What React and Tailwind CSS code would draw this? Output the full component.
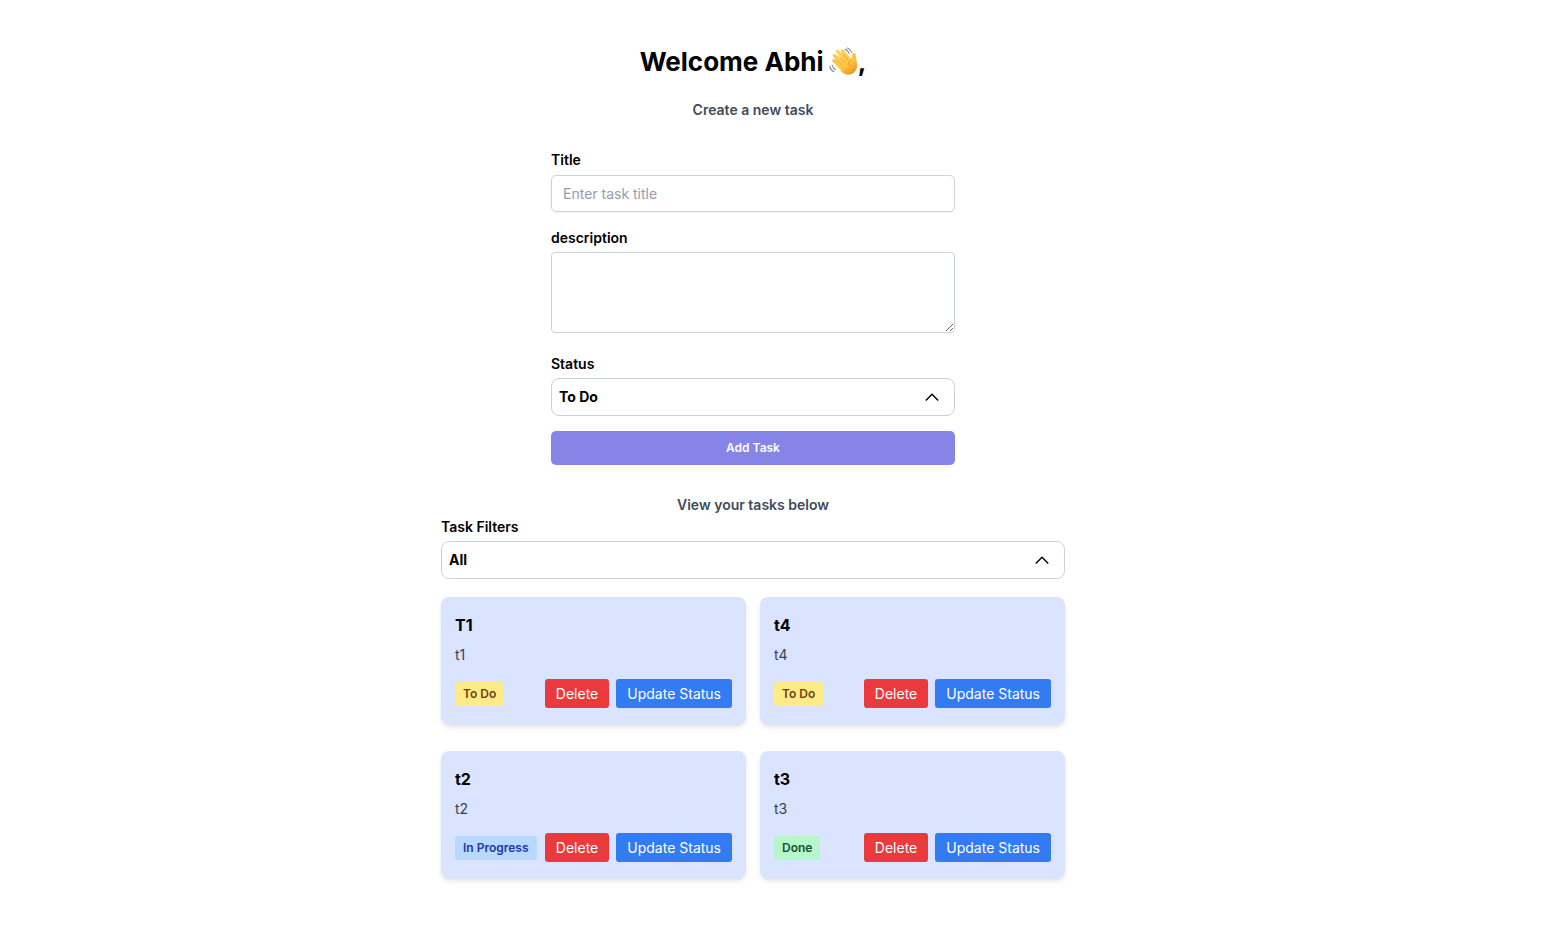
const tasks = [
  { title: "T1", description: "t1", status: "To Do" },
  { title: "t4", description: "t4", status: "To Do" },
  { title: "t2", description: "t2", status: "In Progress" },
  { title: "t3", description: "t3", status: "Done" },
];

const badgeStyles = {
  "To Do": "bg-[#feeb87] text-[#713f12]",
  "In Progress": "bg-[#b9d8fe] text-[#1e3a9f]",
  Done: "bg-[#b5f6cb] text-[#14532d]",
};

function WavingHand() {
  return (
    <svg viewBox="0 0 30 30" className="-mx-px inline-block size-[30px] align-[-6px]" role="img" aria-label="Waving hand">
      <defs>
        <linearGradient id="skin" x1="0" y1="0" x2="0.7" y2="1">
          <stop offset="0" stopColor="#ffd75e" />
          <stop offset="0.65" stopColor="#fdc13c" />
          <stop offset="1" stopColor="#ee9726" />
        </linearGradient>
      </defs>
      <g fill="none" strokeLinecap="round">
        <path d="M5.2 8.6 14 17" strokeWidth="3.2" stroke="#fecb47" />
        <path d="M8.4 4.4 17 14" strokeWidth="3.2" stroke="#ffd052" />
        <path d="M13.4 3.9 20.5 12.4" strokeWidth="3.2" stroke="#ffd052" />
        <path d="M4.8 13.6 12 20.5" strokeWidth="3.1" stroke="#fcc141" />
      </g>
      <path
        d="M8.2 13.6 16.3 6.6 22.1 12.4C22.8 11.2 22.8 9.6 22.9 7.9 23.1 5.6 26.5 5.3 26.9 7.9 27.2 10 27.1 12.4 27.8 15.2 28.9 19.4 27.8 23.3 24.4 25.7 21.1 28.1 16.8 27.9 13.4 24.6L6.9 18Z"
        fill="url(#skin)"
      />
      <g fill="none" stroke="#e69a2b" strokeWidth="0.7" strokeLinecap="round">
        <path d="M6.8 12.4 12.6 17.8M8.4 8.6 15 14.8M12.4 6 18.6 12.8" />
        <path d="M22.1 12.4C19.7 13.8 19 16.2 20.6 18.8" />
        <path d="M12 24C16.5 28.4 21.6 27.9 25 25" strokeWidth="0.9" />
      </g>
      <g fill="none" stroke="#85888d" strokeWidth="1.1" strokeLinecap="round">
        <path d="M16.2 2.4C18.2 3 19.4 4.4 20.1 6.4M18.4 1C20.4 1.6 21.9 3.2 22.5 5.2" />
        <path d="M0.8 19.3C1.2 21.8 2.6 23.6 4.9 24.8M3.2 18.2C3.6 20.2 4.6 21.6 6.5 22.7" />
      </g>
    </svg>
  );
}

function SelectField({ id, label, options }) {
  return (
    <div className="flex flex-col gap-1">
      <label htmlFor={id} className="leading-5 font-semibold">
        {label}
      </label>
      <div className="relative">
        <select
          id={id}
          className="block h-[38px] w-full appearance-none rounded-lg border border-[#cdd1d8] bg-white px-[7px] font-bold"
        >
          {options.map((option) => (
            <option key={option}>{option}</option>
          ))}
        </select>
        <svg
          viewBox="0 0 16 16"
          className="pointer-events-none absolute top-[11px] right-[15px] size-4"
          fill="none"
          stroke="currentColor"
          strokeWidth="1.4"
          aria-hidden="true"
        >
          <path d="M1.8 11.4 8 5.2 14.2 11.4" />
        </svg>
      </div>
    </div>
  );
}

function TaskCard({ task }) {
  return (
    <article className="rounded-lg bg-[#dae3ff] px-[14px] py-4 shadow-md">
      <h2 className="text-base leading-6 font-bold">{task.title}</h2>
      <p className="mt-2 leading-5 text-[#374151]">{task.description}</p>
      <div className="mt-[14px] flex items-center justify-between">
        <span className={`rounded-[3px] px-2 py-1 text-xs leading-4 font-semibold ${badgeStyles[task.status]}`}>
          {task.status}
        </span>
        <div className="flex gap-[7px]">
          <button type="button" className="h-[29px] rounded-[3px] bg-[#eb3a3e] px-[11px] text-white">
            Delete
          </button>
          <button type="button" className="h-[29px] rounded-[3px] bg-[#327bf2] px-[11px] text-white">
            Update Status
          </button>
        </div>
      </div>
    </article>
  );
}

export default function App() {
  return (
    <main className="flex flex-col items-center bg-white pt-11 pr-[45px] pb-14 font-['Inter',sans-serif] text-sm text-black">
      <h1 className="text-[26px] leading-9 font-bold">
        Welcome Abhi <WavingHand />,
      </h1>
      <p className="mt-5 leading-5 font-semibold text-[#424b5a]">Create a new task</p>

      <form className="mt-[30px] flex w-full max-w-[404px] flex-col" onSubmit={(event) => event.preventDefault()}>
        <label htmlFor="title" className="leading-5 font-semibold">
          Title
        </label>
        <input
          id="title"
          type="text"
          placeholder="Enter task title"
          className="mt-[5px] h-[37px] rounded-[5px] border border-[#cdd1d8] px-[11px] shadow-xs placeholder:text-[#959dab]"
        />
        <label htmlFor="description" className="mt-4 leading-5 font-semibold">
          description
        </label>
        <textarea id="description" className="mt-1 h-[81px] resize rounded-[4px] border border-[#cdd1d8] p-2" />
        <div className="mt-[21px]">
          <SelectField id="status" label="Status" options={["To Do", "In Progress", "Done"]} />
        </div>
        <button type="submit" className="mt-[15px] h-[34px] rounded-[5px] bg-[#8784e8] text-xs font-semibold text-white">
          Add Task
        </button>
      </form>

      <p className="mt-[30px] leading-5 font-semibold text-[#424b5a]">View your tasks below</p>

      <section className="mt-[2px] w-full max-w-[624px]">
        <SelectField id="filter" label="Task Filters" options={["All", "To Do", "In Progress", "Done"]} />
        <div className="mt-[18px] grid grid-cols-2 gap-x-[14px] gap-y-[27px]">
          {tasks.map((task) => (
            <TaskCard key={task.title} task={task} />
          ))}
        </div>
      </section>
    </main>
  );
}
